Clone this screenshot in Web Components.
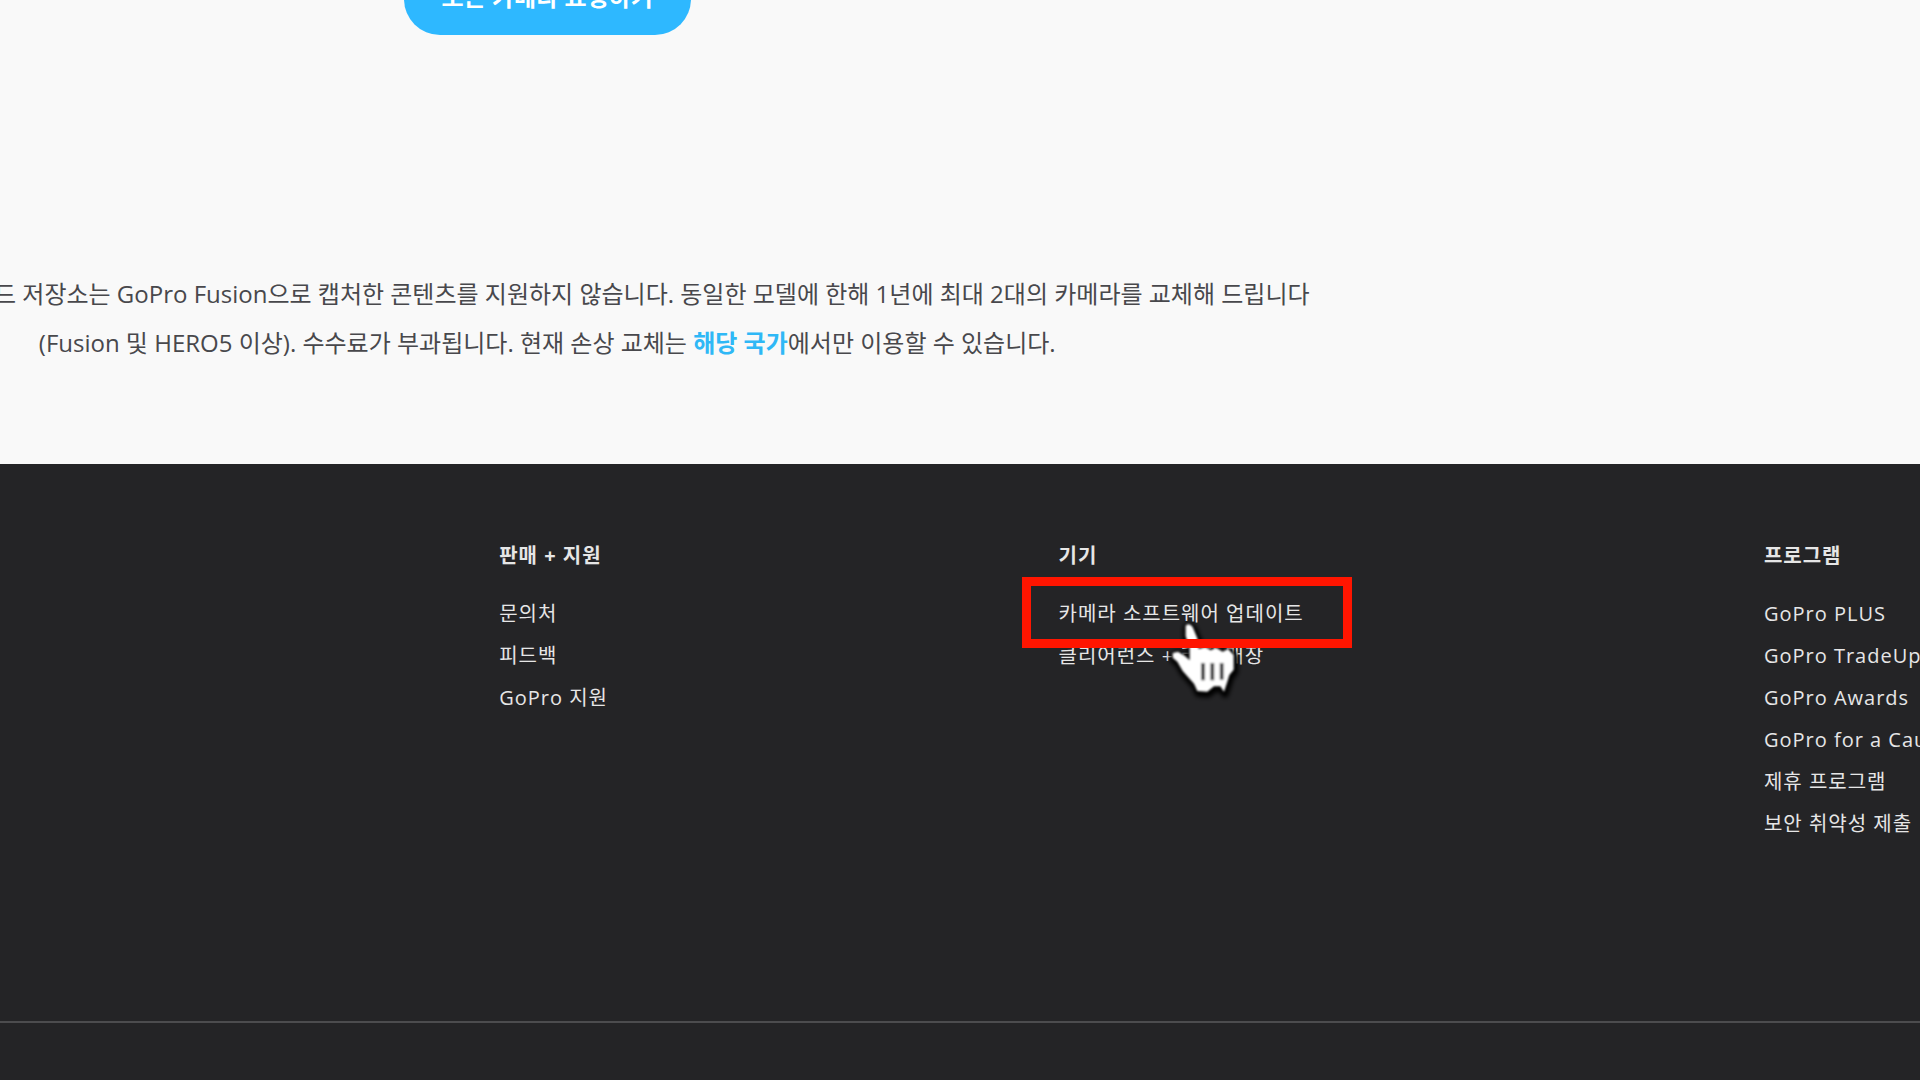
<!DOCTYPE html>
<html lang="ko">
<head>
<meta charset="utf-8">
<title>GoPro</title>
<style>
    body {
        margin: 0;
        min-height: 100vh;
        display: flex;
        flex-direction: column;
        overflow: hidden;
        background: #242426;
        font-family: "Open Sans", "Noto Sans CJK KR", sans-serif;
    }

    gp-footer {
        flex: 1;
    }
</style>
</head>
<body>
    <gp-plan>
        <gp-button slot="action">모든 카메라 요청하기</gp-button>
        *GoPro Plus 클라우드 저장소는 GoPro Fusion으로 캡처한 콘텐츠를 지원하지 않습니다. 동일한 모델에 한해 1년에 최대 2대의 카메라를 교체해 드립니다<br>
        (Fusion 및 HERO5 이상). 수수료가 부과됩니다. 현재 손상 교체는 <a href="#countries">해당 국가</a>에서만 이용할 수 있습니다.
    </gp-plan>

    <gp-footer>
        <gp-links heading="판매 + 지원">
            <gp-link href="#contact">문의처</gp-link>
            <gp-link href="#feedback">피드백</gp-link>
            <gp-link href="#support">GoPro 지원</gp-link>
        </gp-links>
        <gp-links heading="기기">
            <gp-link href="#update" marked>카메라 소프트웨어 업데이트</gp-link>
            <gp-link href="#clearance">클리어런스 + 리퍼 매장</gp-link>
        </gp-links>
        <gp-links heading="프로그램">
            <gp-link href="#plus">GoPro PLUS</gp-link>
            <gp-link href="#tradeup">GoPro TradeUp</gp-link>
            <gp-link href="#awards">GoPro Awards</gp-link>
            <gp-link href="#cause">GoPro for a Cause</gp-link>
            <gp-link href="#affiliate">제휴 프로그램</gp-link>
            <gp-link href="#security">보안 취약성 제출</gp-link>
        </gp-links>
    </gp-footer>

<template id="plan">
    <style>
        :host {
            display: block;
            background: #f9f9f9;
            color: #48484c;
        }

        /* the column runs out past the left edge of the window */
        section {
            display: flex;
            flex-direction: column;
            align-items: center;
            width: 79%;
            margin-left: -11%;
            padding-bottom: 97px;
        }

        p {
            margin: 234px 0 0;
            font-size: 24px;
            line-height: 49px;
            text-align: center;
            white-space: nowrap;
        }

        ::slotted(a) {
            color: #2fb8f6;
            font-weight: 700;
            text-decoration: none;
        }
    </style>
    <section>
        <slot name="action"></slot>
        <p><slot></slot></p>
    </section>
</template>

<template id="button">
    <style>
        :host {
            display: block;
            margin-top: -37px;
        }

        button {
            display: block;
            height: 72px;
            padding: 0 38px 8px;
            border: 0;
            border-radius: 36px;
            background: #2eb8ff;
            color: #fff;
            font: inherit;
            font-size: 24px;
            font-weight: 700;
            white-space: nowrap;
        }
    </style>
    <button type="button"><slot></slot></button>
</template>

<template id="footer">
    <style>
        :host {
            display: flex;
            flex-direction: column;
            background: #242426;
            color: #e6e6e6;
        }

        nav {
            display: grid;
            grid-template-columns: 559fr 705fr 156fr;
            padding: 71px 0 176px 26%;
            border-bottom: 2px solid #4c4c4e;
        }
    </style>
    <nav><slot></slot></nav>
</template>

<template id="links">
    <style>
        :host {
            display: block;
            min-width: 0;
            font-size: 20px;
            line-height: 42px;
            letter-spacing: 1px;
            white-space: nowrap;
        }

        h3 {
            margin: 0 0 16px;
            font-size: 20px;
            font-weight: 700;
        }
    </style>
    <h3></h3>
    <div role="list"><slot></slot></div>
</template>

<template id="link">
    <style>
        :host {
            display: block;
            position: relative;
        }

        a {
            color: inherit;
            text-decoration: none;
        }

        .frame, .hand {
            display: none;
            position: absolute;
            pointer-events: none;
        }

        :host([marked]) {
            width: max-content;
            z-index: 1;
        }

        :host([marked]) .frame,
        :host([marked]) .hand {
            display: block;
        }

        .frame {
            inset: -16px -48px -13px -37px;
            border: 9px solid #ff1500;
        }

        .hand {
            left: 91px;
            top: 18px;
            width: 110px;
            height: 100px;
            overflow: visible;
        }
    </style>
    <a><slot></slot></a>
    <svg class="hand" viewBox="0 0 330 300" aria-hidden="true">
        <defs>
            <filter id="soft" x="-20%" y="-20%" width="140%" height="140%">
                <feGaussianBlur stdDeviation="6"/>
            </filter>
            <filter id="edge">
                <feGaussianBlur stdDeviation="3"/>
            </filter>
            <path id="shape" d="M107 44 Q118 34 128 48 L142 82 L146 114 L166 108 L182 118 L198 110 L218 122 L234 114 L251 132 L251 176 L238 192 L232 212 L222 242 L211 226 L192 226 L172 242 L142 240 L132 218 L98 180 L82 152 L68 140 L68 126 L84 122 L104 134 L119 148 L119 112 L107 76 Z"/>
        </defs>
        <use href="#shape" transform="translate(3 7)" fill="#000" stroke="#000" stroke-width="22" stroke-linejoin="round" filter="url(#soft)"/>
        <g filter="url(#edge)">
            <use href="#shape" fill="#fff"/>
            <path d="M159 156v52M187 156v52M215 156v50" fill="none" stroke="#2c2c2e" stroke-width="11"/>
        </g>
    </svg>
    <span class="frame"></span>
</template>

<script>
    /**
     * Base element, clones its template into an open shadow root
     */
    class Base extends HTMLElement {
        constructor() {
            super();
            const template = document.getElementById(this.constructor.template);
            this.attachShadow({ mode: 'open' }).appendChild(template.content.cloneNode(true));
        }
    }

    class Plan extends Base {
        static template = 'plan';
    }

    class Button extends Base {
        static template = 'button';
    }

    class Footer extends Base {
        static template = 'footer';
    }

    // one titled column of footer links
    class Links extends Base {
        static template = 'links';

        connectedCallback() {
            this.shadowRoot.querySelector('h3').textContent = this.getAttribute('heading');
        }
    }

    // footer link, "marked" puts the frame and the pointer on it
    class Link extends Base {
        static template = 'link';

        connectedCallback() {
            this.setAttribute('role', 'listitem');
            this.shadowRoot.querySelector('a').href = this.getAttribute('href');
            if (!this.hasAttribute('marked')) {
                this.shadowRoot.querySelector('.hand').remove();
                this.shadowRoot.querySelector('.frame').remove();
            }
        }
    }

    customElements.define('gp-plan', Plan);
    customElements.define('gp-button', Button);
    customElements.define('gp-footer', Footer);
    customElements.define('gp-links', Links);
    customElements.define('gp-link', Link);
</script>
</body>
</html>
